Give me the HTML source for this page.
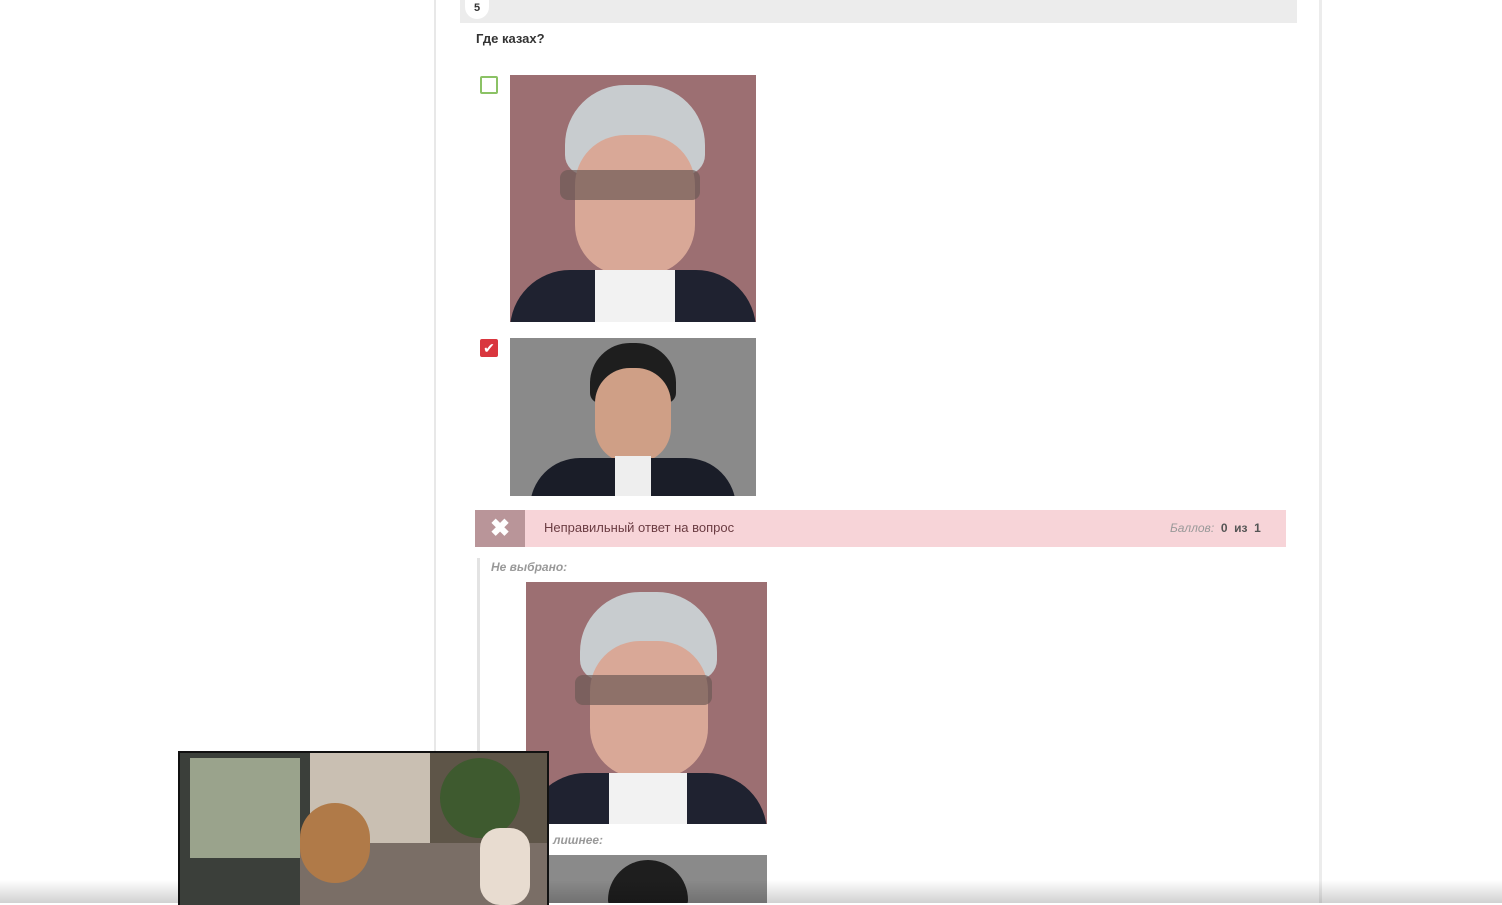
<!DOCTYPE html>
<html><head><meta charset="utf-8"><style>
body{margin:0;width:1502px;height:903px;background:#fff;position:relative;overflow:hidden;font-family:"Liberation Sans",sans-serif}
.a{position:absolute}
.photo1{background:#9c6f72;overflow:hidden}
.photo2{background:#8a8a8a;overflow:hidden}
</style></head><body>
<div class="a" style="left:434px;top:0;width:2px;height:903px;background:#e8e8e8"></div>
<div class="a" style="left:1319px;top:0;width:3px;height:903px;background:#ececec"></div>
<div class="a" style="left:460px;top:0;width:837px;height:23px;background:#ececec"></div>
<div class="a" style="left:465px;top:0;width:24px;height:19px;background:#fff;border-radius:0 0 12px 12px;font-size:11px;font-weight:bold;text-align:center;line-height:17px;color:#333">5</div>
<div class="a" style="left:476px;top:31px;font-size:13px;font-weight:bold;color:#333">Где казах?</div>
<div class="a" style="left:480px;top:76px;width:14px;height:14px;border:2px solid #8bc265;border-radius:2px"></div>
<div class="a photo1" style="left:510px;top:75px;width:246px;height:247px">
 <div class="a" style="left:55px;top:10px;width:140px;height:90px;background:#c8cccf;border-radius:60px 60px 20px 20px"></div>
 <div class="a" style="left:65px;top:60px;width:120px;height:140px;background:#d9a897;border-radius:50px"></div>
 <div class="a" style="left:50px;top:95px;width:140px;height:30px;background:#6e5a55;opacity:.7;border-radius:8px"></div>
 <div class="a" style="left:0;top:195px;width:246px;height:60px;background:#1f2230;border-radius:60px 60px 0 0"></div>
 <div class="a" style="left:85px;top:195px;width:80px;height:60px;background:#f2f2f2"></div>
</div>
<div class="a" style="left:480px;top:339px;width:18px;height:18px;background:#d9363e;border-radius:2px;color:#fff;font-size:14px;text-align:center;line-height:18px">✔</div>
<div class="a photo2" style="left:510px;top:338px;width:246px;height:158px">
 <div class="a" style="left:80px;top:5px;width:86px;height:60px;background:#1e1e1e;border-radius:40px 40px 10px 10px"></div>
 <div class="a" style="left:85px;top:30px;width:76px;height:95px;background:#cf9f86;border-radius:35px"></div>
 <div class="a" style="left:20px;top:120px;width:206px;height:50px;background:#1a1d28;border-radius:60px 60px 0 0"></div>
 <div class="a" style="left:105px;top:118px;width:36px;height:40px;background:#eee"></div>
</div>
<div class="a" style="left:475px;top:510px;width:811px;height:37px;background:#f7d4d8"></div>
<div class="a" style="left:475px;top:510px;width:50px;height:37px;background:#b99599;color:#fff;font-size:24px;font-weight:bold;text-align:center;line-height:37px">✖</div>
<div class="a" style="left:544px;top:520px;font-size:13px;color:#6b3c42">Неправильный ответ на вопрос</div>
<div class="a" style="left:1170px;top:521px;font-size:12px;color:#999"><i>Баллов:</i> <b style="color:#555">&nbsp;0 &nbsp;из &nbsp;1</b></div>
<div class="a" style="left:477px;top:558px;width:3px;height:345px;background:#e3e3e3"></div>
<div class="a" style="left:491px;top:560px;font-size:12px;font-weight:bold;font-style:italic;color:#999">Не выбрано:</div>
<div class="a photo1" style="left:526px;top:582px;width:241px;height:242px">
 <div class="a" style="left:54px;top:10px;width:137px;height:88px;background:#c8cccf;border-radius:60px 60px 20px 20px"></div>
 <div class="a" style="left:64px;top:59px;width:118px;height:137px;background:#d9a897;border-radius:50px"></div>
 <div class="a" style="left:49px;top:93px;width:137px;height:30px;background:#6e5a55;opacity:.7;border-radius:8px"></div>
 <div class="a" style="left:0;top:191px;width:241px;height:60px;background:#1f2230;border-radius:60px 60px 0 0"></div>
 <div class="a" style="left:83px;top:191px;width:78px;height:60px;background:#f2f2f2"></div>
</div>
<div class="a" style="left:553px;top:833px;font-size:12px;font-weight:bold;font-style:italic;color:#999">лишнее:</div>
<div class="a photo2" style="left:548px;top:855px;width:219px;height:48px">
 <div class="a" style="left:60px;top:5px;width:80px;height:50px;background:#1e1e1e;border-radius:40px 40px 10px 10px"></div>
</div>
<div class="a" style="left:0;top:880px;width:1502px;height:23px;background:linear-gradient(rgba(0,0,0,0),rgba(0,0,0,.18))"></div>
<div class="a" style="left:178px;top:751px;width:367px;height:152px;border:2px solid #111;border-bottom:0;background:#8a7c70;overflow:hidden">
 <div class="a" style="left:0;top:0;width:130px;height:152px;background:#3b3f3a"></div>
 <div class="a" style="left:10px;top:5px;width:110px;height:100px;background:#9aa38c"></div>
 <div class="a" style="left:130px;top:0;width:120px;height:152px;background:#c9bfb2"></div>
 <div class="a" style="left:250px;top:0;width:117px;height:152px;background:#5e5548"></div>
 <div class="a" style="left:260px;top:5px;width:80px;height:80px;background:#3e5a2f;border-radius:40px"></div>
 <div class="a" style="left:120px;top:90px;width:247px;height:62px;background:#7a6e66"></div>
 <div class="a" style="left:120px;top:50px;width:70px;height:80px;background:#b07a48;border-radius:35px"></div>
 <div class="a" style="left:300px;top:75px;width:50px;height:77px;background:#e8dcd0;border-radius:20px"></div>
</div>
</body></html>
